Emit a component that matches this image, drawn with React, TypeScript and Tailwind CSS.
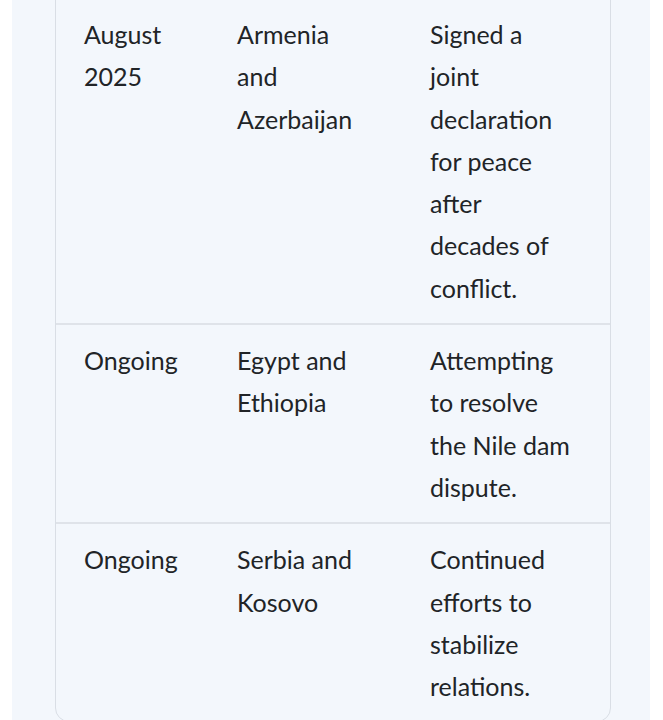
const rows = [
  {
    date: "August 2025",
    parties: "Armenia and Azerbaijan",
    outcome: "Signed a joint declaration for peace after decades of conflict.",
  },
  {
    date: "Ongoing",
    parties: "Egypt and Ethiopia",
    outcome: "Attempting to resolve the Nile dam dispute.",
  },
  {
    date: "Ongoing",
    parties: "Serbia and Kosovo",
    outcome: "Continued efforts to stabilize relations.",
  },
];

const App = () => {
  return (
    <div className="min-h-screen bg-white overflow-hidden">
      <div className="ml-[12px] w-[638px] min-h-screen bg-[#f3f7fc] pl-[43px] pr-[40px]">
        <div className="-mt-[2px] w-[556px] border border-[#d9dee5] rounded-b-[14px] overflow-hidden">
          <table className="w-full table-fixed border-collapse font-['Lato',sans-serif] text-[25px] leading-[42.3px] text-[#212427]">
            <colgroup>
              <col className="w-[153px]" />
              <col className="w-[193px]" />
              <col />
            </colgroup>
            <tbody>
              {rows.map((row, i) => (
                <tr key={i} className={i > 0 ? "border-t-2 border-[#dfe3e9]" : ""}>
                  <td className="align-top pl-[28px] pr-[25px] py-[14px]">{row.date}</td>
                  <td className="align-top pl-[28px] pr-[39px] py-[14px]">{row.parties}</td>
                  <td className="align-top pl-[28px] pr-[37px] py-[14px]">{row.outcome}</td>
                </tr>
              ))}
            </tbody>
          </table>
        </div>
      </div>
    </div>
  );
};

export default App;
